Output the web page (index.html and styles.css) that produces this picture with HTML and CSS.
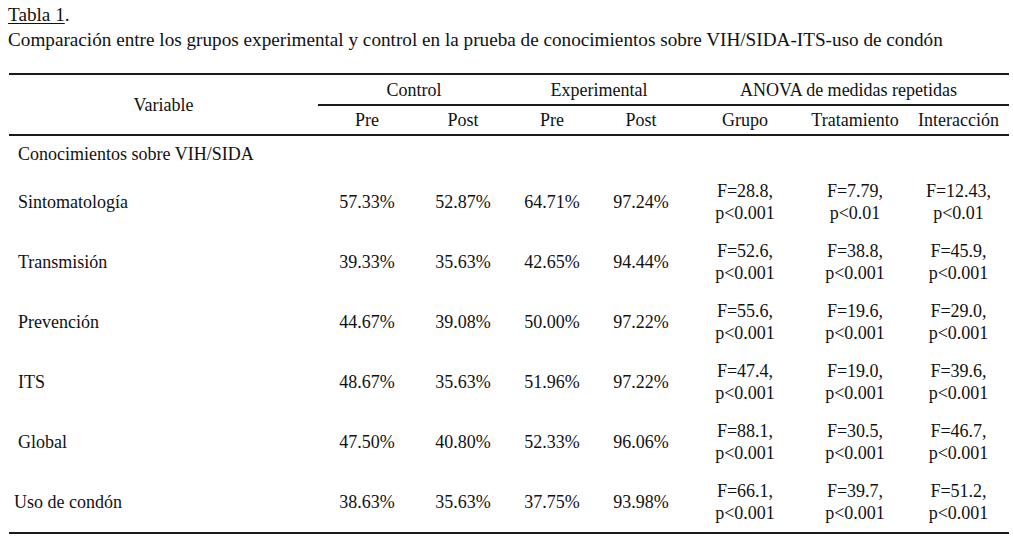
FILE: index.html
```html
<!DOCTYPE html>
<html lang="es">
<head>
<meta charset="utf-8">
<link rel="stylesheet" href="styles.css">
</head>
<body>
<div class="page">
  <p class="title"><span class="u">Tabla 1</span>.</p>
  <p class="subtitle">Comparación entre los grupos experimental y control en la prueba de conocimientos sobre VIH/SIDA-ITS-uso de condón</p>
  <table class="tbl">
    <colgroup>
      <col class="c-var"><col class="c-a"><col class="c-b"><col class="c-c"><col class="c-d"><col class="c-e"><col class="c-f"><col class="c-g">
    </colgroup>
    <thead>
      <tr class="h1">
        <th rowspan="2" class="var-h">Variable</th>
        <th colspan="2" class="grp">Control</th>
        <th colspan="2" class="grp">Experimental</th>
        <th colspan="3" class="grp">ANOVA de medidas repetidas</th>
      </tr>
      <tr class="h2">
        <th>Pre</th><th>Post</th><th>Pre</th><th>Post</th><th>Grupo</th><th>Tratamiento</th><th>Interacción</th>
      </tr>
    </thead>
    <tbody>
      <tr class="section"><td colspan="8" class="label">Conocimientos sobre VIH/SIDA</td></tr>
      <tr class="row">
        <td class="label">Sintomatología</td><td>57.33%</td><td>52.87%</td><td>64.71%</td><td>97.24%</td>
        <td>F=28.8,<br>p&lt;0.001</td><td>F=7.79,<br>p&lt;0.01</td><td>F=12.43,<br>p&lt;0.01</td>
      </tr>
      <tr class="row">
        <td class="label">Transmisión</td><td>39.33%</td><td>35.63%</td><td>42.65%</td><td>94.44%</td>
        <td>F=52.6,<br>p&lt;0.001</td><td>F=38.8,<br>p&lt;0.001</td><td>F=45.9,<br>p&lt;0.001</td>
      </tr>
      <tr class="row">
        <td class="label">Prevención</td><td>44.67%</td><td>39.08%</td><td>50.00%</td><td>97.22%</td>
        <td>F=55.6,<br>p&lt;0.001</td><td>F=19.6,<br>p&lt;0.001</td><td>F=29.0,<br>p&lt;0.001</td>
      </tr>
      <tr class="row">
        <td class="label">ITS</td><td>48.67%</td><td>35.63%</td><td>51.96%</td><td>97.22%</td>
        <td>F=47.4,<br>p&lt;0.001</td><td>F=19.0,<br>p&lt;0.001</td><td>F=39.6,<br>p&lt;0.001</td>
      </tr>
      <tr class="row">
        <td class="label">Global</td><td>47.50%</td><td>40.80%</td><td>52.33%</td><td>96.06%</td>
        <td>F=88.1,<br>p&lt;0.001</td><td>F=30.5,<br>p&lt;0.001</td><td>F=46.7,<br>p&lt;0.001</td>
      </tr>
      <tr class="row last">
        <td class="label label-shift">Uso de condón</td><td>38.63%</td><td>35.63%</td><td>37.75%</td><td>93.98%</td>
        <td>F=66.1,<br>p&lt;0.001</td><td>F=39.7,<br>p&lt;0.001</td><td>F=51.2,<br>p&lt;0.001</td>
      </tr>
    </tbody>
  </table>
</div>
</body>
</html>
```
FILE: styles.css
```css
html, body {
  margin: 0;
  padding: 0;
  background: #fff;
}
body {
  font-family: "Liberation Serif", "Times New Roman", serif;
  font-size: 18px;
  color: #111;
}
.page {
  padding: 2px 0 0 8px;
}
.title, .subtitle {
  margin: 0;
  font-size: 19.2px;
  line-height: 25px;
}
.u {
  text-decoration: underline;
  text-underline-offset: 2px;
}
.tbl {
  margin-top: 21px;
  margin-left: 1px;
  width: 1000px;
  border-collapse: collapse;
  table-layout: fixed;
  line-height: 22px;
}
.c-var { width: 309px; }
.c-a { width: 98px; }
.c-b { width: 94px; }
.c-c { width: 84px; }
.c-d { width: 94px; }
.c-e { width: 114px; }
.c-f { width: 106px; }
.c-g { width: 101px; }
.tbl th, .tbl td {
  padding: 0;
  font-weight: normal;
  text-align: center;
  vertical-align: middle;
}
.tbl thead tr.h1 th {
  border-top: 2px solid #1a1a1a;
  height: 29px;
}
.tbl thead tr.h1 th.grp {
  border-bottom: 2px solid #1a1a1a;
}
.tbl thead tr.h2 th {
  border-bottom: 2px solid #1a1a1a;
  height: 28px;
}
.tbl thead th.var-h {
  border-bottom: 2px solid #1a1a1a;
}
.tbl tr.section td {
  height: 36px;
  padding-top: 0;
}
.tbl tr.row td {
  height: 60px;
}
.tbl tr.last td {
  height: 60px;
  border-bottom: 2px solid #1a1a1a;
}
.tbl td.label {
  text-align: left;
  padding-left: 9px;
}
.tbl td.label-shift {
  padding-left: 5px;
}
```
